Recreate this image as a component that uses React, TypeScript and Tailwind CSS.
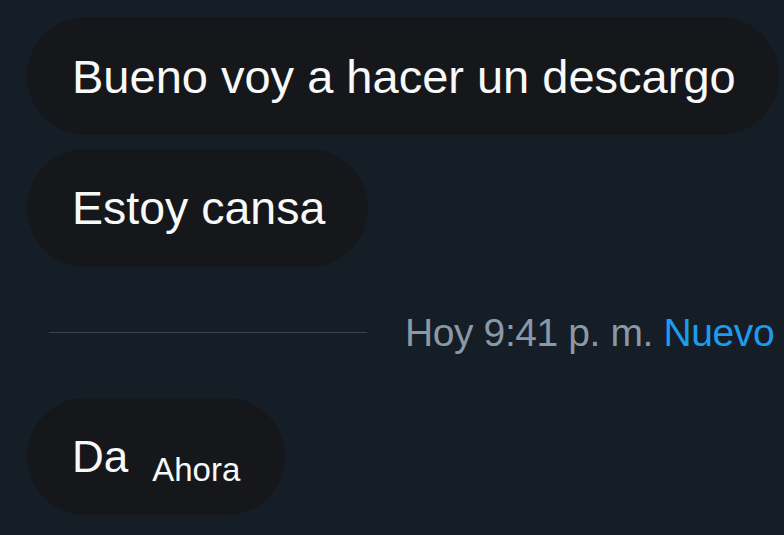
export default function App() {
  const font = { fontFamily: '"Liberation Sans", Arial, sans-serif' };
  return (
    <div style={font} className="w-[784px] h-[535px] overflow-hidden bg-[#151d27] pl-[27px] pt-[17px] flex flex-col items-start">
      {/* Messages */}
      <div className="h-[118px] w-[752px] rounded-full bg-[#16171a] pl-[45px] flex items-center text-[47px] leading-none text-[#f7f9f9] whitespace-nowrap">
        Bueno voy a hacer un descargo
      </div>
      <div className="mt-[14px] h-[118px] w-[341px] rounded-full bg-[#16171a] pl-[45px] flex items-center text-[46.5px] leading-none text-[#f7f9f9] whitespace-nowrap">
        Estoy cansa
      </div>

      {/* Divider */}
      <div className="mt-[43px] ml-[22px] h-[44px] flex items-center whitespace-nowrap">
        <div className="w-[318px] h-px bg-[#3a444d]" />
        <div className="ml-[38px] text-[39px] leading-none tracking-[-0.4px]">
          <span className="text-[#8b98a5]">Hoy 9:41 p. m.</span>{' '}
          <span className="text-[#1d9bf0]">Nuevo</span>
        </div>
      </div>

      <div className="mt-[44px] h-[117px] w-[258px] rounded-full bg-[#16171a] pl-[45px] flex items-center text-[#f7f9f9] whitespace-nowrap">
        <span className="text-[44px] leading-none">Da</span>
        <span className="ml-[24px] text-[33px] leading-none translate-y-[13px]">Ahora</span>
      </div>
    </div>
  );
}
